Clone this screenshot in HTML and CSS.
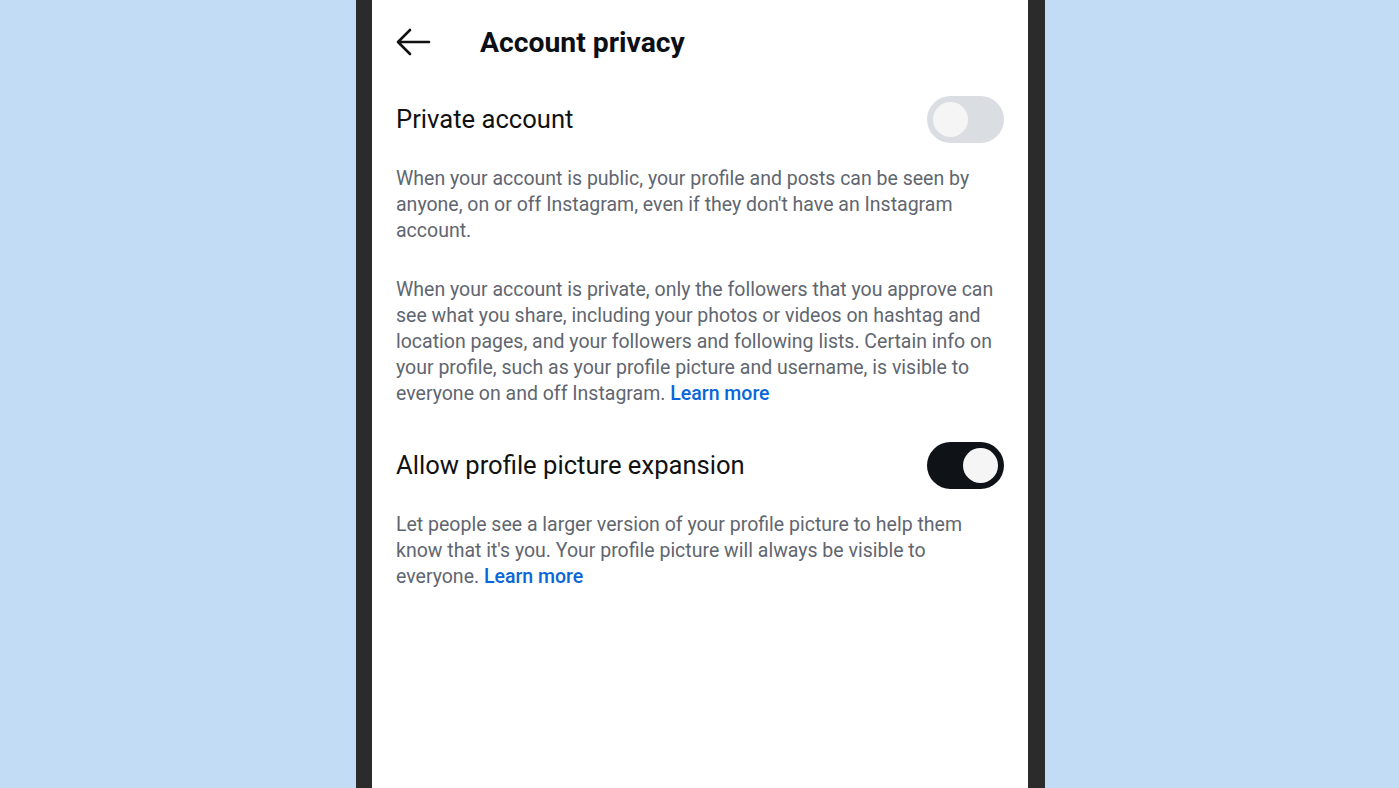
FILE: index.html
```html
<!DOCTYPE html>
<html lang="en">
<head>
  <meta charset="UTF-8" />
  <title>Account privacy</title>
  <link rel="stylesheet" href="styles.css">
</head>
<body>
  <div class="phone">
    <div class="screen">
      <div class="topbar">
        <svg class="back" width="36" height="30" viewBox="0 0 36 30">
          <path d="M34 15H3M15 3L3 15l12 12" fill="none" stroke="#111" stroke-width="2.6" stroke-linecap="round" stroke-linejoin="round"/>
        </svg>
        <h1>Account privacy</h1>
      </div>

      <div class="setting-row">
        <span class="setting-label">Private account</span>
        <div class="toggle"><div class="knob"></div></div>
      </div>
      <p class="desc">When your account is public, your profile and posts can be seen by anyone, on or off Instagram, even if they don't have an Instagram account.</p>
      <p class="desc second">When your account is private, only the followers that you approve can see what you share, including your photos or videos on hashtag and location pages, and your followers and following lists. Certain info on your profile, such as your profile picture and username, is visible to everyone on and off Instagram. <a href="#">Learn more</a></p>

      <div class="setting-row">
        <span class="setting-label">Allow profile picture expansion</span>
        <div class="toggle on"><div class="knob"></div></div>
      </div>
      <p class="desc">Let people see a larger version of your profile picture to help them know that it's you. Your profile picture will always be visible to everyone. <a href="#">Learn more</a></p>
    </div>
  </div>
</body>
</html>
```

FILE: styles.css
```css
* {
  box-sizing: border-box;
}

body {
  margin: 0;
  height: 788px;
  overflow: hidden;
  background: #c2dcf5;
  font-family: Roboto, "Liberation Sans", sans-serif;
}

.phone {
  width: 689px;
  height: 788px;
  margin-left: 356px;
  background: #2b2b2b;
  padding: 0 17px 0 16px;
}

.screen {
  background: #fff;
  height: 100%;
  padding: 0 24px;
}

.topbar {
  display: flex;
  align-items: center;
  height: 84px;
}

.back {
  display: block;
  margin-left: -1px;
}

h1 {
  margin: 0 0 0 49px;
  font-size: 28.3px;
  font-weight: 700;
  color: #0c0f14;
}

.setting-row {
  display: flex;
  align-items: center;
  justify-content: space-between;
  height: 70px;
}

.setting-label {
  font-size: 25.6px;
  color: #111;
}

.toggle {
  width: 77px;
  height: 47px;
  border-radius: 24px;
  background: #dadde1;
  padding: 6px;
  display: flex;
}

.toggle .knob {
  width: 35px;
  height: 35px;
  border-radius: 50%;
  background: #f5f5f5;
}

.toggle.on {
  background: #0f1216;
  justify-content: flex-end;
}

.desc {
  margin: 12px 0 0;
  font-size: 19.5px;
  line-height: 26px;
  color: #5f6670;
}

.desc.second {
  margin: 33px 0 23px;
}

.desc a {
  color: #0866d8;
  text-decoration: none;
  font-weight: 500;
}
```
